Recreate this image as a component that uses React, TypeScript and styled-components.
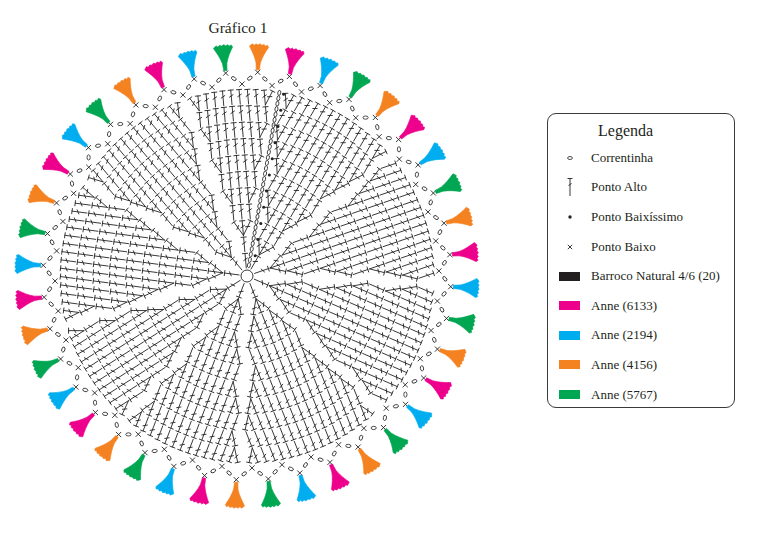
import React from 'react';
import styled, { createGlobalStyle } from 'styled-components';

const GlobalStyle = createGlobalStyle`
  html, body {
    margin: 0;
    padding: 0;
    background: #fff;
  }
  body {
    font-family: "Liberation Serif", "Times New Roman", serif;
    color: #231f20;
    overflow: hidden;
  }
`;

const Page = styled.div`
  display: flex;
  width: 779px;
  height: 553px;
`;

const ChartColumn = styled.div`
  width: 547px;
  display: flex;
  flex-direction: column;
`;

const ChartTitle = styled.div`
  width: 476px;
  height: 22px;
  padding-top: 18px;
  line-height: 20px;
  font-size: 15.5px;
  text-align: center;
`;

const ChartSvg = styled.svg`
  display: block;
`;

const LegendBox = styled.div`
  margin-top: 113px;
  width: 188px;
  height: 295px;
  box-sizing: border-box;
  border: 1px solid #3a3a3a;
  border-radius: 9px;
  padding-top: 4px;
`;

const LegendTitle = styled.div`
  padding-left: 50px;
  font-size: 16px;
  line-height: 25px;
`;

const LegendRow = styled.div`
  display: flex;
  align-items: center;
  height: 29.6px;
  font-size: 13px;
`;

const IconCell = styled.div`
  width: 43px;
  display: flex;
  justify-content: center;
  align-items: center;
`;

const Swatch = styled.div<{ color: string }>`
  width: 21px;
  height: 9px;
  background: ${({ color }) => color};
`;

const INK = '#222';
const COLORS = ['#f58220', '#ec008c', '#00aeef', '#00a651'];

const CX = 247;
const CY = 236;
const rad = (a: number) => (a * Math.PI) / 180;
const f = (n: number) => n.toFixed(2);

// direction measured clockwise from straight up
const dir = (a: number): [number, number] => [Math.sin(rad(a)), -Math.cos(rad(a))];

const tStitch = (bx: number, by: number, tx: number, ty: number) => {
  const dx = tx - bx;
  const dy = ty - by;
  const len = Math.hypot(dx, dy);
  const ux = dx / len;
  const uy = dy / len;
  const px = -uy;
  const py = ux;
  const mx = bx + ux * len * 0.6;
  const my = by + uy * len * 0.6;
  return (
    `M${f(bx)} ${f(by)}L${f(tx)} ${f(ty)}` +
    `M${f(tx - px * 2.6)} ${f(ty - py * 2.6)}L${f(tx + px * 2.6)} ${f(ty + py * 2.6)}` +
    `M${f(mx - px * 1.9 - ux * 1.1)} ${f(my - py * 1.9 - uy * 1.1)}L${f(mx + px * 1.9 + ux * 1.1)} ${f(my + py * 1.9 + uy * 1.1)}`
  );
};

const cross = (x: number, y: number, s = 2.3) =>
  `M${f(x - s)} ${f(y - s)}L${f(x + s)} ${f(y + s)}M${f(x - s)} ${f(y + s)}L${f(x + s)} ${f(y - s)}`;

const SEAM = 10;
// sector boundaries, clockwise from the seam
const BOUNDS = [10, 50, 92, 135, 182, 220, 255, 300, 340, 370];
const ROUNDS = 11;
const R0 = 8;
const H = 16.4;
const SPACING = 8.3;
const STITCH = 14.6;

const buildStitches = () => {
  let d = '';
  for (let k = 0; k < BOUNDS.length - 1; k++) {
    const a0 = BOUNDS[k];
    const a1 = BOUNDS[k + 1];
    const g = (a0 + a1) / 2;
    const hw = (a1 - a0) / 2;
    const [ux, uy] = dir(g);
    const vx = -uy;
    const vy = ux;
    const sinHw = Math.sin(rad(hw));
    const along = (R: number, l: number) => Math.sqrt(Math.max(R * R - l * l, 0));
    const limit = (r: number) => (R0 + (r - 1) * H + STITCH) * sinHw - 2.6;
    for (let r = 1; r <= ROUNDS; r++) {
      const B = R0 + (r - 1) * H;
      const D = B + STITCH;
      const lim = Math.max(0, limit(r));
      const prevLim = r > 1 ? limit(r - 1) : -1;
      const J = Math.floor(lim / SPACING);
      for (let j = -J; j <= J; j++) {
        const l = j * SPACING;
        let l0 = l;
        if (r > 1 && Math.abs(l) > prevLim && j !== 0) {
          l0 = Math.sign(j) * (Math.abs(j) - 1) * SPACING;
        }
        const b = along(B, l0);
        const t = along(D, l);
        const bx = CX + ux * b + vx * l0;
        const by = CY + uy * b + vy * l0;
        const tx = CX + ux * t + vx * l;
        const ty = CY + uy * t + vy * l;
        d += tStitch(bx, by, tx, ty);
      }
    }
  }
  return d;
};

const buildSeam = () => {
  const [ux, uy] = dir(SEAM);
  const ovals: { x: number; y: number }[] = [];
  for (let t = R0 + 3; t < R0 + ROUNDS * H - 2; t += H / 3) {
    ovals.push({ x: CX + ux * t, y: CY + uy * t });
  }
  const dots: { x: number; y: number }[] = [];
  for (let r = 1; r <= ROUNDS; r++) {
    const t = R0 + r * H - 3;
    dots.push({ x: CX + ux * t - uy * 4.5, y: CY + uy * t + ux * 4.5 });
  }
  return { ovals, dots };
};

const TASSELS = 40;
const START = 3;
const RP = 204;
const RM = 192;

const buildEdge = () => {
  let xs = '';
  const ovals: { x: number; y: number; a: number }[] = [];
  for (let i = 0; i < TASSELS; i++) {
    const a = START + (360 / TASSELS) * i;
    const am = a + 180 / TASSELS;
    const an = a + 360 / TASSELS;
    const [px, py] = dir(a);
    const [mx, my] = dir(am);
    const [nx, ny] = dir(an);
    const P = { x: CX + px * RP, y: CY + py * RP };
    const M = { x: CX + mx * RM, y: CY + my * RM };
    const N = { x: CX + nx * RP, y: CY + ny * RP };
    xs += cross(P.x, P.y);
    xs += cross(M.x, M.y);
    const arms = [
      [P, M],
      [M, N],
    ];
    arms.forEach(([s, e]) => {
      const ang = (Math.atan2(e.y - s.y, e.x - s.x) * 180) / Math.PI;
      ovals.push({ x: s.x + (e.x - s.x) * 0.5, y: s.y + (e.y - s.y) * 0.5, a: ang });
    });
  }
  return { xs, ovals };
};

const TASSEL_PATH =
  'M-1.6 0L1.6 0L2.2 -7C3.8 -13 6.6 -18 9.6 -22.8L8.4 -25L6.4 -24L5 -25.6L2.8 -24.6L1 -26L-1.2 -24.8L-3 -25.8L-5 -24.4L-6.8 -25.6L-9.6 -23.2C-6.6 -18 -3.8 -13 -2.2 -7Z';

const Tassels = () => (
  <g>
    {Array.from({ length: TASSELS }, (_, i) => {
      const a = START + (360 / TASSELS) * i;
      const [px, py] = dir(a);
      const x = CX + px * (RP + 2.5);
      const y = CY + py * (RP + 2.5);
      const color = COLORS[i % 4];
      return (
        <path
          key={i}
          d={TASSEL_PATH}
          fill={color}
          stroke={color}
          strokeWidth={0.6}
          strokeLinejoin="round"
          transform={`translate(${f(x)} ${f(y)}) rotate(${f(a)})`}
        />
      );
    })}
  </g>
);

const stitchPath = buildStitches();
const seam = buildSeam();
const edge = buildEdge();

const CrochetChart = () => (
  <ChartSvg width={490} height={513} viewBox="0 0 490 513">
    <circle cx={CX} cy={CY} r={6} fill="none" stroke={INK} strokeWidth={0.9} />
    <path d={stitchPath} fill="none" stroke={INK} strokeWidth={0.9} strokeLinecap="round" />
    {seam.ovals.map((o, i) => (
      <ellipse
        key={`so${i}`}
        cx={o.x}
        cy={o.y}
        rx={1.5}
        ry={2.5}
        fill="none"
        stroke={INK}
        strokeWidth={0.8}
        transform={`rotate(${SEAM} ${f(o.x)} ${f(o.y)})`}
      />
    ))}
    {seam.dots.map((o, i) => (
      <circle key={`sd${i}`} cx={o.x} cy={o.y} r={1.5} fill={INK} />
    ))}
    <path d={edge.xs} fill="none" stroke={INK} strokeWidth={0.9} strokeLinecap="round" />
    {edge.ovals.map((o, i) => (
      <ellipse
        key={`eo${i}`}
        cx={o.x}
        cy={o.y}
        rx={2.6}
        ry={1.6}
        fill="none"
        stroke={INK}
        strokeWidth={0.8}
        transform={`rotate(${f(o.a)} ${f(o.x)} ${f(o.y)})`}
      />
    ))}
    <Tassels />
  </ChartSvg>
);

const ChainIcon = () => (
  <svg width={8} height={6} viewBox="0 0 8 6">
    <ellipse cx={4} cy={3} rx={2.4} ry={1.5} fill="none" stroke={INK} strokeWidth={0.8} />
  </svg>
);

const TallIcon = () => (
  <svg width={8} height={20} viewBox="0 0 8 20">
    <path d="M1.5 1.5H6.5M4 1.5V19M2.5 8.5L5.5 6.5" fill="none" stroke={INK} strokeWidth={0.9} />
  </svg>
);

const DotIcon = () => (
  <svg width={6} height={6} viewBox="0 0 6 6">
    <circle cx={3} cy={3} r={1.7} fill={INK} />
  </svg>
);

const CrossIcon = () => (
  <svg width={8} height={8} viewBox="0 0 8 8">
    <path d="M1.8 1.8L6.2 6.2M1.8 6.2L6.2 1.8" fill="none" stroke={INK} strokeWidth={0.9} />
  </svg>
);

const legendItems: { icon: React.ReactNode; label: string }[] = [
  { icon: <ChainIcon />, label: 'Correntinha' },
  { icon: <TallIcon />, label: 'Ponto Alto' },
  { icon: <DotIcon />, label: 'Ponto Baixíssimo' },
  { icon: <CrossIcon />, label: 'Ponto Baixo' },
  { icon: <Swatch color="#231f20" />, label: 'Barroco Natural 4/6 (20)' },
  { icon: <Swatch color="#ec008c" />, label: 'Anne (6133)' },
  { icon: <Swatch color="#00aeef" />, label: 'Anne (2194)' },
  { icon: <Swatch color="#f58220" />, label: 'Anne (4156)' },
  { icon: <Swatch color="#00a651" />, label: 'Anne (5767)' },
];

const Legend = () => (
  <LegendBox>
    <LegendTitle>Legenda</LegendTitle>
    {legendItems.map((item) => (
      <LegendRow key={item.label}>
        <IconCell>{item.icon}</IconCell>
        <span>{item.label}</span>
      </LegendRow>
    ))}
  </LegendBox>
);

const App: React.FC = () => (
  <>
    <GlobalStyle />
    <Page>
      <ChartColumn>
        <ChartTitle>Gráfico 1</ChartTitle>
        <CrochetChart />
      </ChartColumn>
      <Legend />
    </Page>
  </>
);

export default App;
